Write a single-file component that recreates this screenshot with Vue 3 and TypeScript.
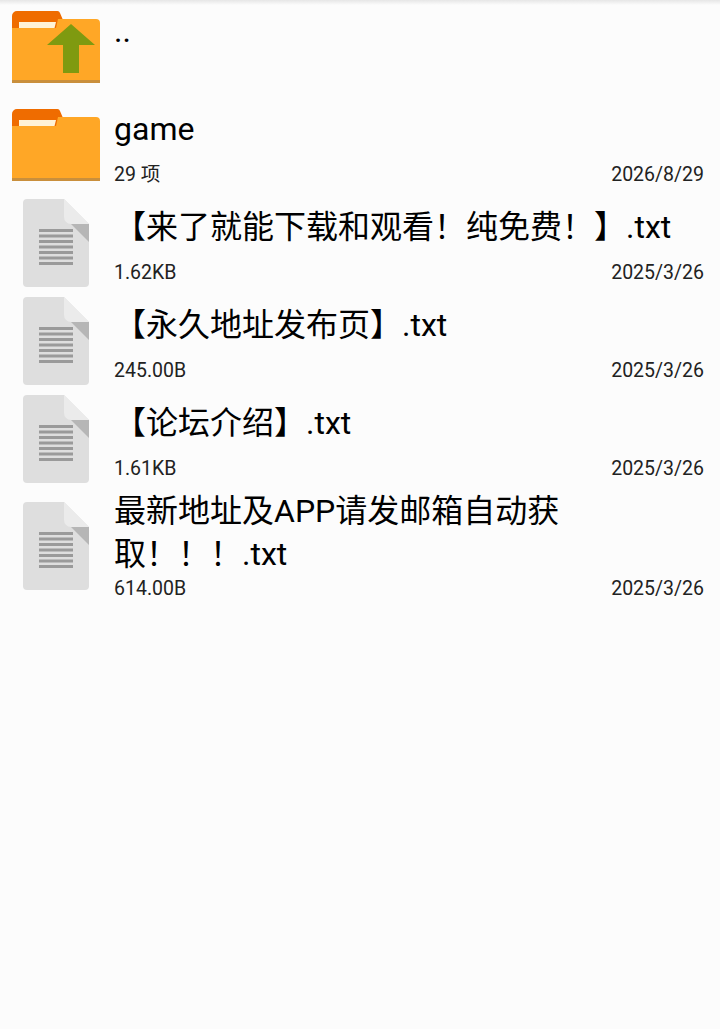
<template>
  <div class="page">
    <div class="top-shadow"></div>
    <div class="list">
      <div
        v-for="item in items"
        :key="item.name"
        class="row"
        :class="[item.kind, { 'two-line': item.wrap }]"
      >
        <div class="icon">
          <svg v-if="item.kind !== 'file'" width="88" height="72" viewBox="0 0 88 72">
            <path d="M0 5a5 5 0 0 1 5-5h40a3 3 0 0 1 3 2l3 7v12H0z" fill="#ef6c00" />
            <path d="M7 11h37l-1.500 6H7z" fill="#fff3d6" />
            <path d="M0 17h44l2-9h38a4 4 0 0 1 4 4v57H0z" fill="#ffa726" />
            <rect y="69" width="88" height="3" fill="#c98f3c" />
            <path
              v-if="item.kind === 'up'"
              d="M59 13l24 21H67v28H51V34H35z"
              fill="#7f9a10"
            />
          </svg>
          <svg v-else width="66" height="88" viewBox="0 0 66 88">
            <path d="M4 0h37l25 25v59a4 4 0 0 1-4 4H4a4 4 0 0 1-4-4V4a4 4 0 0 1 4-4z" fill="#dedede" />
            <path d="M41 0l25 25H48a7 7 0 0 1-7-7z" fill="#ebebeb" />
            <path d="M48 25h18v18z" fill="#b6b6b6" />
            <rect v-for="n in 7" :key="n" x="16" :y="30 + (n - 1) * 5.5" width="34" height="3" fill="#9a9a9a" />
          </svg>
        </div>
        <div class="body">
          <div class="title">{{ item.name }}</div>
          <div v-if="item.size" class="meta">
            <span>{{ item.size }}</span>
            <span>{{ item.date }}</span>
          </div>
        </div>
      </div>
    </div>
  </div>
</template>

<script setup lang="ts">
type Item = {
  kind: "up" | "folder" | "file";
  name: string;
  size?: string;
  date?: string;
  wrap?: boolean;
};

const items: Item[] = [
  { kind: "up", name: ".." },
  { kind: "folder", name: "game", size: "29 项", date: "2026/8/29" },
  { kind: "file", name: "【来了就能下载和观看！纯免费！】.txt", size: "1.62KB", date: "2025/3/26" },
  { kind: "file", name: "【永久地址发布页】.txt", size: "245.00B", date: "2025/3/26" },
  { kind: "file", name: "【论坛介绍】.txt", size: "1.61KB", date: "2025/3/26" },
  { kind: "file", name: "最新地址及APP请发邮箱自动获取！！！.txt", size: "614.00B", date: "2025/3/26", wrap: true },
];
</script>

<style scoped>
.page {
  position: relative;
  height: 1029px;
  overflow: hidden;
  background: #fcfcfc;
  font-family: Roboto, "Noto Sans CJK SC", sans-serif;
  color: #000;
}
.top-shadow {
  position: absolute;
  top: 0;
  left: 0;
  right: 0;
  height: 5px;
  background: linear-gradient(#e6e6e6, #fcfcfc);
}
.row {
  display: flex;
  align-items: flex-start;
  height: 98px;
  padding-top: 4px;
  box-sizing: border-box;
}
.row.up {
  height: 94px;
  padding-top: 0;
}
.row.two-line {
  height: 120px;
}
.icon {
  flex: none;
  box-sizing: border-box;
  width: 114px;
  padding: 3px 0 0 23px;
}
.icon svg {
  display: block;
}
.up .icon {
  padding: 11px 0 0 12px;
}
.folder .icon {
  padding: 11px 0 0 12px;
}
.two-line .icon {
  padding-top: 12px;
}
.body {
  flex: 1;
  min-width: 0;
}
.title {
  display: flex;
  align-items: center;
  min-height: 62px;
  padding-right: 16px;
  font-size: 32px;
  line-height: 43px;
}
.meta {
  display: flex;
  justify-content: space-between;
  padding: 3px 16px 0 0;
  font-size: 19.5px;
  line-height: 24px;
  color: #222;
}
.two-line .meta {
  padding-top: 1px;
}
</style>
